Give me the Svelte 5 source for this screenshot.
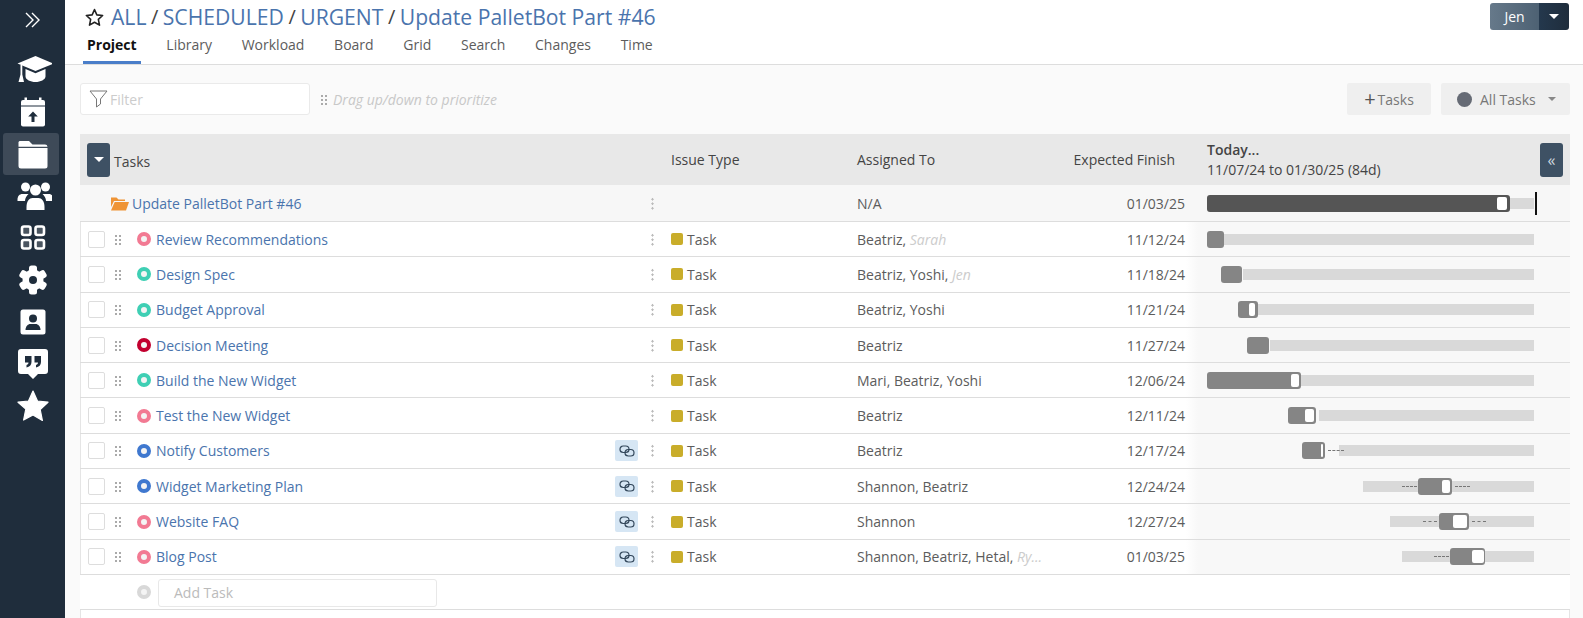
<script lang="ts">
  const crumbs = ['ALL', 'SCHEDULED', 'URGENT', 'Update PalletBot Part #46'];
  const tabs = ['Project', 'Library', 'Workload', 'Board', 'Grid', 'Search', 'Changes', 'Time'];
  const navItems = ['cap', 'calendar', 'folder', 'people', 'grid', 'gear', 'contact', 'quote', 'star'];

  const ORIGIN = 1207;

  // gantt values are page x coordinates, converted to offsets in place()
  const rows = [
    { name: 'Review Recommendations', status: 'pink', who: 'Beatriz,', faint: 'Sarah', due: '11/12/24', bar: [1207, 1224], track: [1224, 1534] },
    { name: 'Design Spec', status: 'teal', who: 'Beatriz, Yoshi,', faint: 'Jen', due: '11/18/24', bar: [1221, 1242], track: [1243, 1534] },
    { name: 'Budget Approval', status: 'teal', who: 'Beatriz, Yoshi', due: '11/21/24', bar: [1238, 1258], handle: [1249, 1255], track: [1258, 1534] },
    { name: 'Decision Meeting', status: 'red', who: 'Beatriz', due: '11/27/24', bar: [1247, 1269], track: [1270, 1534] },
    { name: 'Build the New Widget', status: 'teal', who: 'Mari, Beatriz, Yoshi', due: '12/06/24', bar: [1207, 1301], handle: [1291, 1299], track: [1301, 1534] },
    { name: 'Test the New Widget', status: 'pink', who: 'Beatriz', due: '12/11/24', bar: [1288, 1316], handle: [1305, 1314], track: [1319, 1534] },
    { name: 'Notify Customers', status: 'blue', who: 'Beatriz', due: '12/17/24', link: true, bar: [1302, 1325], handle: [1321, 1323], track: [1339, 1534], dashes: [[1328, 1344]] },
    { name: 'Widget Marketing Plan', status: 'blue', who: 'Shannon, Beatriz', due: '12/24/24', link: true, bar: [1418, 1452], handle: [1442, 1450], track: [1363, 1534], dashes: [[1402, 1417], [1455, 1470]] },
    { name: 'Website FAQ', status: 'pink', who: 'Shannon', due: '12/27/24', link: true, bar: [1439, 1469], handle: [1453, 1467], track: [1390, 1534], dashes: [[1423, 1437], [1472, 1486]] },
    { name: 'Blog Post', status: 'pink', who: 'Shannon, Beatriz, Hetal,', faint: 'Ry...', due: '01/03/25', link: true, bar: [1450, 1485], handle: [1472, 1484], track: [1402, 1534], dashes: [[1434, 1449]] },
  ];

  const place = ([a, b]: number[]) => `left:${a - ORIGIN}px;width:${b - a}px`;
</script>

<div class="page">
  <nav class="side">
    <button class="expand" aria-label="Expand">
      <svg width="18" height="16" viewBox="0 0 18 16" fill="none" stroke="#fff" stroke-width="1.4"><path d="M2 1l7 7-7 7M8 1l7 7-7 7" /></svg>
    </button>
    {#each navItems as item}
      <div class="nav-item" class:active={item === 'folder'}>
        <svg width="38" height="32" viewBox="0 0 38 32" fill="#fff">
          {#if item === 'cap'}
            <g transform="translate(2.500 1)">
              <path d="M19 1 37 8.500 19 16 1 8.500z" />
              <path d="M9 14v7.500c0 3 5 5.500 10 5.500s10-2.500 10-5.500V14l-10 4.200z" />
              <path d="M4 10h1.800v9.500l1.700 7.500H2l2-7.500z" />
            </g>
          {:else if item === 'calendar'}
            <path d="M10.500 1.500h2.500v2.500h12V1.500h2.500V4h1.500a2 2 0 0 1 2 2v3.500H7V6a2 2 0 0 1 2-2h1.500z" />
            <path d="M7 10.500h24V28.500a2 2 0 0 1-2 2H9a2 2 0 0 1-2-2z" />
            <path d="M19 15.500l4.800 5h-3.300V26h-3v-5.500h-3.300z" fill="#1f2d3c" />
          {:else if item === 'folder'}
            <path d="M5.500 3h9.500l3.500 3.500H31a2.500 2.500 0 0 1 2.500 2.300H4.500V4z" />
            <path d="M4.500 10h29v18a2.500 2.500 0 0 1-2.500 2.500H7A2.500 2.500 0 0 1 4.500 28z" />
          {:else if item === 'people'}
            <g transform="translate(2.500 0)">
              <circle cx="9" cy="7" r="4.500" /><circle cx="29" cy="7" r="4.500" /><circle cx="19" cy="10" r="5.500" />
              <path d="M1 20c0-4 2-6 5-6h6c-2 2-3.500 4-3.500 7H1zM37 20c0-4-2-6-5-6h-6c2 2 3.500 4 3.500 7H37z" />
              <path d="M10 30v-3c0-6 3-9 6-9h6c3 0 6 3 6 9v3z" />
            </g>
          {:else if item === 'grid'}
            <g fill="#4a5560" stroke="#fff" stroke-width="2.600">
              <rect x="8" y="4.500" width="8.500" height="8.500" rx="2" /><rect x="21.500" y="4.500" width="8.500" height="8.500" rx="2" />
              <rect x="8" y="18" width="8.500" height="8.500" rx="2" /><rect x="21.500" y="18" width="8.500" height="8.500" rx="2" />
            </g>
          {:else if item === 'gear'}
            <g transform="translate(19 16)">
              <circle r="10.500" />
              <rect x="-4" y="-14.500" width="8" height="29" rx="2.500" />
              <rect x="-4" y="-14.500" width="8" height="29" rx="2.500" transform="rotate(60)" />
              <rect x="-4" y="-14.500" width="8" height="29" rx="2.500" transform="rotate(120)" />
              <circle r="4" fill="#1f2d3c" />
            </g>
          {:else if item === 'contact'}
            <rect x="6.500" y="3.500" width="25" height="25" rx="2.500" />
            <circle cx="19" cy="12.500" r="4" fill="#1f2d3c" />
            <path d="M11.500 24c0-4 3-6 4.500-6h6c1.500 0 4.500 2 4.500 6z" fill="#1f2d3c" />
          {:else if item === 'quote'}
            <path d="M7 1h24a3 3 0 0 1 3 3v19a3 3 0 0 1-3 3h-7l-5 5-5-5H7a3 3 0 0 1-3-3V4a3 3 0 0 1 3-3z" />
            <path d="M11 8h6.500v6c0 3-2 5-5 5.500v-2.500c1.500-.5 2-1.500 2-2.500H11zM20.500 8H27v6c0 3-2 5-5 5.500v-2.500c1.500-.5 2-1.500 2-2.500h-3.500z" fill="#1f2d3c" />
          {:else}
            <path d="M19 1l4.500 10 10.500 1.200-7.800 7.300 2.200 11-9.400-5.600L9.600 30l2.200-11L4 12.200l10.500-1.200z" stroke="#fff" stroke-width="1.200" stroke-linejoin="round" />
          {/if}
        </svg>
      </div>
    {/each}
  </nav>

  <div class="main">
    <header class="top">
      <div class="top-row">
        <div class="crumbs">
          <svg width="19" height="18" viewBox="0 0 24 23" fill="none" stroke="#222" stroke-width="2" stroke-linejoin="round"><path d="M12 2l3 6.800 7.400.8-5.500 5 1.500 7.300-6.400-3.700-6.400 3.700 1.500-7.300-5.500-5 7.400-.8z" /></svg>
          {#each crumbs as c, i}
            {#if i > 0}<span class="sep">/</span>{/if}
            <a href="#top">{c}</a>
          {/each}
        </div>
        <div class="user">
          <span class="user-name">Jen</span>
          <span class="user-caret"><i class="caret"></i></span>
        </div>
      </div>
      <div class="tabs">
        {#each tabs as t, i}
          <span class="tab" class:on={i === 0}>{t}</span>
        {/each}
      </div>
    </header>

    <div class="toolbar">
      <div class="filter">
        <svg width="19" height="18" viewBox="0 0 19 18" fill="none" stroke="#777" stroke-width="1"><path d="M1 1h17l-6.500 8v5l-4 3V9z" stroke-linejoin="round" /></svg>
        <span>Filter</span>
      </div>
      <span class="grip light"></span>
      <span class="hint">Drag up/down to prioritize</span>
      <span class="spacer"></span>
      <div class="btn add"><span class="plus">+</span>Tasks</div>
      <div class="btn all"><span class="all-dot"></span>All Tasks<i class="caret small"></i></div>
    </div>

    <div class="table">
      <div class="thead">
        <div class="th-main"><span class="square"><i class="caret"></i></span><span class="th-tasks">Tasks</span></div>
        <div>Issue Type</div>
        <div>Assigned To</div>
        <div class="th-finish">Expected Finish</div>
        <div class="th-gantt">
          <div><b>Today...</b><br />11/07/24 to 01/30/25 (84d)</div>
          <span class="square chev">«</span>
        </div>
      </div>

      <div class="row root">
        <div class="c-main root-name">
          <svg width="19" height="15" viewBox="0 0 19 15" fill="#ef9435"><path d="M1 1.500h5.500L8.500 3.500H15v1.500H4L1 11z" /><path d="M4.700 6H19l-3 8.500H1z" /></svg>
          <a href="#top">Update PalletBot Part #46</a>
        </div>
        <div class="c-link"></div>
        <div class="c-dots"><span class="dots"></span></div>
        <div class="c-issue"></div>
        <div class="c-assigned">N/A</div>
        <div class="c-due">01/03/25</div>
        <div class="c-gantt">
          <div class="chart">
            <span class="track" style={place([1207, 1534])}></span>
            <span class="bar dark" style={place([1207, 1510])}></span>
            <span class="handle" style={place([1497, 1507])}></span>
            <span class="today"></span>
          </div>
        </div>
      </div>

      {#each rows as r}
        <div class="row">
          <div class="c-main">
            <span class="check"></span>
            <span class="grip"></span>
            <span class="status {r.status}"></span>
            <a href="#top">{r.name}</a>
          </div>
          <div class="c-link">
            {#if r.link}
              <span class="link-badge">
                <svg width="16" height="14" viewBox="0 0 16 14" fill="none" stroke="#33475b" stroke-width="1.200"><rect x="1" y="2" width="9" height="6.500" rx="3.250" /><rect x="6" y="5.500" width="9" height="6.500" rx="3.250" /></svg>
              </span>
            {/if}
          </div>
          <div class="c-dots"><span class="dots"></span></div>
          <div class="c-issue"><span class="swatch"></span>Task</div>
          <div class="c-assigned">{r.who}{#if r.faint}&nbsp;<em>{r.faint}</em>{/if}</div>
          <div class="c-due">{r.due}</div>
          <div class="c-gantt">
            <div class="chart">
              <span class="track" style={place(r.track)}></span>
              {#each r.dashes ?? [] as d}
                <span class="dash" style={place(d)}></span>
              {/each}
              <span class="bar" style={place(r.bar)}></span>
              {#if r.handle}<span class="handle" style={place(r.handle)}></span>{/if}
            </div>
          </div>
        </div>
      {/each}

      <div class="row add-row">
        <span class="status none"></span>
        <div class="add-input">Add Task</div>
      </div>
    </div>
  </div>
</div>

<style>
  :global(body) {
    margin: 0;
    background: #fafafa;
    overflow: hidden;
  }
  .page {
    display: flex;
    height: 618px;
    font-family: "Open Sans", "Noto Sans", sans-serif;
    font-size: 14px;
    color: #5c5c5c;
    overflow: hidden;
  }
  a { color: #4a74ad; text-decoration: none; }
  i { display: block; }

  .side {
    flex: 0 0 65px;
    background: #1f2d3c;
    display: flex;
    flex-direction: column;
    align-items: center;
  }
  .expand {
    height: 40px;
    margin-bottom: 9px;
    padding: 0;
    background: none;
    border: 0;
    display: flex;
    align-items: center;
  }
  .nav-item {
    flex: 0 0 42px;
    width: 56px;
    display: flex;
    align-items: center;
    justify-content: center;
    border-radius: 3px;
  }
  .nav-item.active { background: #3e4a58; margin-right: 3px; }
  .nav-item.active svg { margin-left: 3px; }

  .main { flex: 1; min-width: 0; }

  .top {
    height: 61px;
    background: #fff;
    border-bottom: 1px solid #ddd;
    padding: 3px 14px 0 20px;
  }
  .top-row { display: flex; justify-content: space-between; height: 32px; }
  .crumbs {
    display: flex;
    align-items: center;
    gap: 4.500px;
    font-size: 21.150px;
    height: 27px;
  }
  .crumbs svg { margin-right: 2.500px; }
  .sep { color: #444; font-size: 20px; }

  .user { display: flex; height: 27px; width: 79px; border-radius: 3px; overflow: hidden; color: #fff; }
  .user-name {
    flex: 1;
    background: linear-gradient(90deg, #66798a, #4d6173);
    display: flex;
    align-items: center;
    justify-content: center;
  }
  .user-caret {
    flex: 0 0 30px;
    background: linear-gradient(90deg, #24384d, #1f2d3c);
    display: flex;
    align-items: center;
    justify-content: center;
  }
  .caret {
    width: 0;
    height: 0;
    border-left: 5.500px solid transparent;
    border-right: 5.500px solid transparent;
    border-top: 5.500px solid #fff;
  }

  .tabs { display: flex; gap: 21.700px; margin-left: -2px; }
  .tab {
    height: 26px;
    padding: 0 4px;
    line-height: 20px;
    color: #5c5c5c;
  }
  .tab.on {
    font-weight: 700;
    color: #111;
    border-bottom: 3px solid #4a7ec9;
  }

  .toolbar {
    display: flex;
    align-items: center;
    height: 32px;
    margin: 18px 13px 19px 15px;
  }
  .filter {
    width: 230px;
    height: 32px;
    box-sizing: border-box;
    background: #fff;
    border: 1px solid #eaeaea;
    border-radius: 3px;
    display: flex;
    align-items: center;
    padding-left: 8px;
    gap: 2px;
    color: #ccc;
  }
  .grip {
    width: 8px;
    height: 11px;
    flex: none;
    background-image: radial-gradient(circle, #aaa 1.100px, transparent 1.300px);
    background-size: 4px 4px;
  }
  .grip.light { margin-left: 10px; margin-right: 5px; }
  .hint { font-style: italic; color: #c8c8c8; }
  .spacer { flex: 1; }
  .btn {
    height: 32px;
    background: #efefef;
    border-radius: 2px;
    display: flex;
    align-items: center;
    color: #777;
  }
  .add { width: 84px; justify-content: center; gap: 2px; margin-right: 10px; }
  .plus { font-size: 20px; line-height: 20px; color: #555; }
  .all { width: 129px; padding-left: 16px; box-sizing: border-box; }
  .all-dot { width: 15px; height: 15px; border-radius: 50%; background: #666b75; margin-right: 8px; }
  .caret.small { border-width: 4px 4px 0; border-top-color: #888; margin-left: 12px; }

  .table {
    margin: 0 13px 0 15px;
    background: #fff;
    height: 484px;
    box-shadow: inset 1px 0 #e5e5e5, inset -1px 0 #e5e5e5;
  }
  .thead {
    display: grid;
    grid-template-columns: 591px 186px 205px 124px 1fr;
    height: 51px;
    background: #e8e8e8;
    align-items: center;
    color: #444;
  }
  .th-main { display: flex; align-items: center; gap: 4px; padding-left: 7px; }
  .th-tasks { padding-top: 3px; }
  .th-finish { text-align: right; padding-right: 11px; }
  .th-gantt {
    display: flex;
    justify-content: space-between;
    align-items: center;
    padding: 0 7px 0 21px;
    line-height: 20px;
  }
  .th-gantt b { font-weight: 600; }
  .square {
    width: 23px;
    height: 34px;
    background: #3e5164;
    border-radius: 3px;
    display: flex;
    align-items: center;
    justify-content: center;
    color: #cdd6de;
    font-size: 16px;
  }

  .row {
    display: grid;
    grid-template-columns: 535px 23px 33px 186px 205px 124px 1fr;
    height: 35.300px;
    box-sizing: border-box;
    border-bottom: 1px solid #ddd;
    align-items: center;
  }
  .row.root { height: 37px; background: #f7f7f7; }
  .c-main { display: flex; align-items: center; padding-left: 8px; min-width: 0; }
  .root-name { padding-left: 30px; gap: 3px; }
  .check {
    width: 17px;
    height: 17px;
    box-sizing: border-box;
    border: 1px solid #ddd;
    border-radius: 2px;
    background: #fff;
    margin-right: 9px;
  }
  .c-main .grip { margin-right: 15px; }
  .status {
    flex: none;
    width: 14px;
    height: 14px;
    box-sizing: border-box;
    border-radius: 50%;
    border: 4.500px solid;
    background: #f4f4f4;
    margin-right: 5px;
  }
  .pink { border-color: #f27a93; }
  .teal { border-color: #3fcfb4; }
  .red { border-color: #c2002f; }
  .blue { border-color: #3f78cf; }
  .none { border-color: #d8d8d8; }

  .c-link { display: flex; }
  .link-badge {
    width: 23px;
    height: 21px;
    background: #d6e6f4;
    border-radius: 2px;
    display: flex;
    align-items: center;
    justify-content: center;
  }
  .c-dots { display: flex; justify-content: center; padding-right: 5px; }
  .dots {
    width: 3px;
    height: 13px;
    background-image: radial-gradient(circle, #bbb 1.100px, transparent 1.300px);
    background-size: 3px 4.500px;
  }
  .c-issue { display: flex; align-items: center; gap: 4px; }
  .swatch { width: 12px; height: 12px; border-radius: 2px; background: #c9ad2a; }
  .c-assigned { white-space: nowrap; }
  .c-assigned em { color: #ccc; }
  .c-due { text-align: right; padding-right: 1px; }

  .c-gantt {
    align-self: stretch;
    display: flex;
    align-items: center;
    padding-left: 21px;
    background: linear-gradient(90deg, #fff, #f8f8f8 12px);
  }
  .root .c-gantt { background: none; }
  .chart { position: relative; width: 327px; height: 17px; }
  .chart span { position: absolute; display: block; }
  .track { top: 3px; height: 11px; background: #d9d9d9; }
  .bar { top: 0; height: 17px; border-radius: 3px; background: #858585; }
  .bar.dark { background: #555; }
  .handle { top: 2px; height: 13px; background: #fff; border-radius: 2px; }
  .dash { top: 8px; height: 0; border-top: 1px dashed #777; }
  .today { left: 328px; top: -3px; width: 2px; height: 23px; background: #111; }

  .add-row {
    display: flex;
    padding-left: 57px;
    background: #fff;
    gap: 2px;
  }
  .add-input {
    width: 279px;
    height: 28px;
    margin-top: 1px;
    box-sizing: border-box;
    border: 1px solid #e8e8e8;
    border-radius: 3px;
    padding-left: 15px;
    line-height: 26px;
    color: #bbb;
  }
</style>
